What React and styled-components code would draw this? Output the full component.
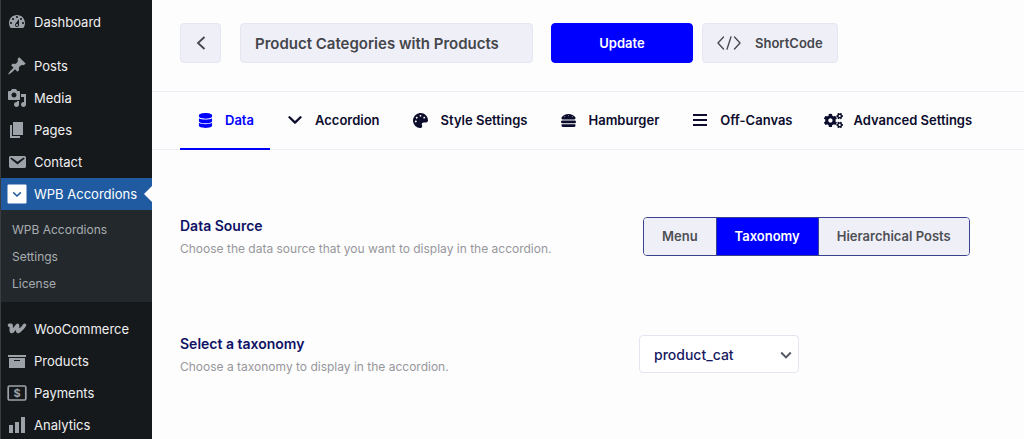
import React, { useState } from 'react';
import styled, { createGlobalStyle, css } from 'styled-components';
import { FaDatabase, FaPalette, FaHamburger, FaCogs } from 'react-icons/fa';

const GlobalStyle = createGlobalStyle`
  *, *::before, *::after {
    box-sizing: border-box;
  }

  body {
    margin: 0;
    background: #fdfdfe;
    font-family: Inter, "Liberation Sans", sans-serif;
    font-size: 13px;
  }

  button, input, select {
    font-family: inherit;
  }
`;

const Page = styled.div`
  display: flex;
  min-height: 100vh;
`;

const Sidebar = styled.nav`
  flex: 0 0 152px;
  padding-top: 6px;
  background: #16191c;
  border-left: 1px solid #3a3d40;
`;

const MenuList = styled.ul`
  list-style: none;
  margin: 0 0 ${({ $gap }) => $gap || 0}px;
  padding: 0;
`;

const MenuLink = styled.a`
  position: relative;
  display: flex;
  align-items: center;
  gap: 7px;
  height: 32px;
  padding-left: 6px;
  color: #f0f0f1;
  font-size: 13px;
  white-space: nowrap;
  text-decoration: none;

  svg {
    flex: none;
    width: 20px;
    height: 20px;
    fill: #9da2a8;
  }

  ${({ $active }) =>
    $active &&
    css`
      background: #205ba2;
      color: #fff;

      &::after {
        content: '';
        position: absolute;
        top: 8px;
        right: 0;
        border: 8px solid transparent;
        border-left-width: 0;
        border-right-color: #fdfdfe;
      }
    `}
`;

const SubMenu = styled.ul`
  list-style: none;
  margin: 0;
  padding: 6px 0 5px;
  background: #23282c;
`;

const SubLink = styled.a`
  display: block;
  padding-left: 11px;
  color: #a9adb1;
  font-size: 12px;
  line-height: 27px;
  text-decoration: none;
`;

const Main = styled.main`
  flex: 1;
  min-width: 0;
`;

const TopBar = styled.header`
  display: flex;
  align-items: center;
  padding: 23px 28px 28px;
  border-bottom: 1px solid #ededf5;
`;

const Button = styled.button`
  display: flex;
  align-items: center;
  justify-content: center;
  gap: 14px;
  height: 40px;
  padding: 0 14px;
  border: 1px solid ${({ $primary }) => ($primary ? '#0000ff' : '#e6e6f3')};
  border-radius: 4px;
  background: ${({ $primary }) => ($primary ? '#0000ff' : '#efeff8')};
  color: ${({ $primary }) => ($primary ? '#fff' : '#44464b')};
  font-size: 13px;
  font-weight: 600;
  cursor: pointer;
`;

const BackButton = styled(Button)`
  width: 41px;
  margin-right: 19px;
  padding: 0;
`;

const UpdateButton = styled(Button)`
  width: 142px;
  margin-right: 9px;
`;

const TitleInput = styled.input`
  flex: 0 1 293px;
  min-width: 0;
  height: 40px;
  margin-right: 18px;
  padding: 0 14px;
  border: 1px solid #e6e6f3;
  border-radius: 4px;
  background: #efeff8;
  color: #44464b;
  font-size: 15px;
  font-weight: 600;
`;

const Tabs = styled.div`
  display: flex;
  padding: 0 28px;
  border-bottom: 1px solid #ededf5;
`;

const Tab = styled.button`
  display: flex;
  align-items: center;
  gap: 10px;
  height: 58px;
  margin-bottom: -1px;
  padding: 0 16px 0 15px;
  border: 0;
  border-bottom: 2px solid ${({ $active }) => ($active ? '#0000ff' : 'transparent')};
  background: none;
  color: ${({ $active }) => ($active ? '#0000ff' : '#0c0c2c')};
  font-size: 13px;
  font-weight: 600;
  white-space: nowrap;
  cursor: pointer;
`;

const TabIcon = styled.span`
  display: flex;
  justify-content: center;
  width: 20px;
  font-size: ${({ $size }) => $size}px;
`;

const Settings = styled.section`
  display: grid;
  gap: 78px;
  padding: 67px 28px;
`;

const Field = styled.div`
  display: grid;
  grid-template-columns: 9fr 7fr;
  align-items: start;
`;

const FieldName = styled.div`
  display: block;
  color: #0f1165;
  font-size: 14px;
  font-weight: 600;
  line-height: 18px;
`;

const FieldHint = styled.p`
  margin: 6px 0 0;
  color: #97979b;
  font-size: 12px;
  line-height: 16px;
`;

const Segments = styled.div`
  display: flex;
  width: max-content;
  margin-left: 4px;
  border: 1px solid #3a418f;
  border-radius: 4px;
  overflow: hidden;
`;

const Segment = styled.label`
  padding: 0 18px;
  background: #efeff8;
  color: #4e4f55;
  font-size: 13px;
  font-weight: 600;
  line-height: 37px;
  cursor: pointer;

  & + & {
    border-left: 1px solid #3a418f;
  }

  &:has(input:checked) {
    background: #0000ff;
    color: #fff;
  }

  input {
    position: absolute;
    opacity: 0;
    pointer-events: none;
  }
`;

const SelectWrap = styled.div`
  position: relative;
  width: 160px;

  svg {
    position: absolute;
    top: 14px;
    right: 7px;
    pointer-events: none;
  }
`;

const Select = styled.select`
  width: 100%;
  height: 38px;
  padding: 0 28px 0 14px;
  border: 1px solid #e4e4f2;
  border-radius: 4px;
  appearance: none;
  background: #fff;
  color: #17195f;
  font-size: 14px;
  font-weight: 500;
`;

const icons = {
  dashboard: (
    <path d="M3.76 16h12.48c1.1-1.37 1.76-3.11 1.76-5 0-4.42-3.58-8-8-8s-8 3.58-8 8c0 1.89.66 3.63 1.76 5zM10 4c.55 0 1 .45 1 1s-.45 1-1 1-1-.45-1-1 .45-1 1-1zM6 6c.55 0 1 .45 1 1s-.45 1-1 1-1-.45-1-1 .45-1 1-1zm8 0c.55 0 1 .45 1 1s-.45 1-1 1-1-.45-1-1 .45-1 1-1zm-5.37 5.55L12 7v6c0 1.1-.9 2-2 2s-2-.9-2-2c0-.57.24-1.08.63-1.45zM4 10c.55 0 1 .45 1 1s-.45 1-1 1-1-.45-1-1 .45-1 1-1zm12 0c.55 0 1 .45 1 1s-.45 1-1 1-1-.45-1-1 .45-1 1-1zm-5 3c0-.55-.45-1-1-1s-1 .45-1 1 .45 1 1 1 1-.45 1-1z" />
  ),
  posts: (
    <path d="M10.44 3.02l1.82-1.82 6.36 6.35-1.83 1.82c-1.05-.68-2.48-.57-3.41.36l-.75.75c-.92.93-1.04 2.35-.35 3.41l-1.83 1.82-2.41-2.41-2.8 2.79c-.42.42-3.38 2.71-3.8 2.29s1.86-3.39 2.28-3.81l2.79-2.79L4.1 9.36l1.83-1.82c1.05.69 2.48.57 3.4-.36l.75-.75c.93-.92 1.05-2.35.36-3.41z" />
  ),
  media: (
    <path d="M13 11V4c0-.55-.45-1-1-1h-1.67L9 1H5L3.67 3H2c-.55 0-1 .45-1 1v7c0 .55.45 1 1 1h10c.55 0 1-.45 1-1zM7 4.5c1.38 0 2.5 1.12 2.5 2.5S8.38 9.5 7 9.5 4.5 8.38 4.5 7 5.62 4.5 7 4.5zM14 6h5v10.5c0 1.38-1.12 2.5-2.5 2.5S14 17.88 14 16.5s1.12-2.5 2.5-2.5c.17 0 .34.02.5.05V9h-3V6zm-4 8.05V13h2v3.5c0 1.38-1.12 2.5-2.5 2.5S7 17.88 7 16.5 8.12 14 9.5 14c.17 0 .34.02.5.05z" />
  ),
  pages: <path d="M6 15V2h10v13H6zm-1 1h8v2H3V5h2v11z" />,
  contact: (
    <path d="M3.87 4h13.25C18.37 4 19 4.59 19 5.79v8.42c0 1.19-.63 1.79-1.88 1.79H3.87c-1.25 0-1.88-.6-1.88-1.79V5.79c0-1.2.63-1.79 1.88-1.79zm6.62 8.6l6.74-5.53c.24-.2.43-.66.13-1.07-.29-.41-.82-.42-1.17-.17l-5.7 3.86L4.8 5.83c-.35-.25-.88-.24-1.17.17-.3.41-.11.87.13 1.07z" />
  ),
  accordions: (
    <>
      <rect x="0.5" y="0.5" width="19" height="19" rx="1" fill="#fff" />
      <path d="M6.2 8.4l3.8 3.6 3.8-3.6" fill="none" stroke="#205ba2" strokeWidth="1.5" />
    </>
  ),
  woo: (
    <path
      d="M2.4 6.2h1.8v5.2q0 2 1.6.6L10.6 6.2v5.2q0 2 1.6.6Q15.6 9.6 17.6 6.2"
      fill="none"
      stroke="#9da2a8"
      strokeWidth="3.4"
      strokeLinejoin="round"
      strokeLinecap="round"
    />
  ),
  products: <path d="M19 4v2H1V4h18zM2 7h16v10H2V7zm11 3V9H7v1h6z" />,
  payments: (
    <>
      <rect x="1.2" y="3" width="17.6" height="14" rx="1.2" fill="none" stroke="#9da2a8" strokeWidth="1.7" />
      <text x="10" y="14" textAnchor="middle" fontSize="11" fontWeight="700">$</text>
    </>
  ),
  analytics: <path d="M18 18V2h-4v16h4zm-6 0V7H8v11h4zm-6 0v-8H2v8h4z" />,
};

const contentMenu = [
  ['posts', 'Posts'],
  ['media', 'Media'],
  ['pages', 'Pages'],
  ['contact', 'Contact'],
];

const shopMenu = [
  ['woo', 'WooCommerce'],
  ['products', 'Products'],
  ['payments', 'Payments'],
  ['analytics', 'Analytics'],
];

const LinesIcon = () => (
  <svg width="14" height="14" viewBox="0 0 14 14" stroke="currentColor" strokeWidth="2">
    <path d="M0 2h14M0 7h14M0 12h14" />
  </svg>
);

const ChevronIcon = () => (
  <svg width="14" height="14" viewBox="0 0 14 14" fill="none" stroke="currentColor" strokeWidth="2.3" strokeLinecap="round" strokeLinejoin="round">
    <path d="M1.5 4.2L7 9.6l5.5-5.4" />
  </svg>
);

const tabs = [
  { label: 'Data', icon: <FaDatabase />, size: 15 },
  { label: 'Accordion', icon: <ChevronIcon />, size: 14 },
  { label: 'Style Settings', icon: <FaPalette />, size: 15 },
  { label: 'Hamburger', icon: <FaHamburger />, size: 15 },
  { label: 'Off-Canvas', icon: <LinesIcon />, size: 14 },
  { label: 'Advanced Settings', icon: <FaCogs />, size: 19 },
];

function MenuItem({ icon, label, active, children }) {
  return (
    <li>
      <MenuLink href="#" $active={active}>
        <svg viewBox="0 0 20 20" aria-hidden="true">{icons[icon]}</svg>
        {label}
      </MenuLink>
      {children}
    </li>
  );
}

function AdminMenu() {
  return (
    <Sidebar>
      <MenuList $gap={12}>
        <MenuItem icon="dashboard" label="Dashboard" />
      </MenuList>
      <MenuList $gap={11}>
        {contentMenu.map(([icon, label]) => (
          <MenuItem key={icon} icon={icon} label={label} />
        ))}
        <MenuItem icon="accordions" label="WPB Accordions" active>
          <SubMenu>
            {['WPB Accordions', 'Settings', 'License'].map((label) => (
              <li key={label}>
                <SubLink href="#">{label}</SubLink>
              </li>
            ))}
          </SubMenu>
        </MenuItem>
      </MenuList>
      <MenuList>
        {shopMenu.map(([icon, label]) => (
          <MenuItem key={icon} icon={icon} label={label} />
        ))}
      </MenuList>
    </Sidebar>
  );
}

function App() {
  const [tab, setTab] = useState('Data');
  const [source, setSource] = useState('Taxonomy');

  return (
    <Page>
      <GlobalStyle />
      <AdminMenu />
      <Main>
        <TopBar>
          <BackButton type="button" aria-label="Back">
            <svg width="10" height="14" viewBox="0 0 10 14" fill="none" stroke="currentColor" strokeWidth="1.8">
              <path d="M8.5 1L2 7l6.5 6" />
            </svg>
          </BackButton>
          <TitleInput aria-label="Title" defaultValue="Product Categories with Products" />
          <UpdateButton type="button" $primary>Update</UpdateButton>
          <Button type="button">
            <svg width="24" height="14" viewBox="0 0 24 14" fill="none" stroke="currentColor" strokeWidth="1.3" strokeLinecap="round" strokeLinejoin="round">
              <path d="M6.5 1L1 7l5.5 6M17.5 1L23 7l-5.5 6M14 .8L10 13.2" />
            </svg>
            ShortCode
          </Button>
        </TopBar>

        <Tabs role="tablist">
          {tabs.map(({ label, icon, size }) => (
            <Tab
              key={label}
              type="button"
              role="tab"
              aria-selected={tab === label}
              $active={tab === label}
              onClick={() => setTab(label)}
            >
              <TabIcon $size={size}>{icon}</TabIcon>
              {label}
            </Tab>
          ))}
        </Tabs>

        <Settings>
          <Field>
            <div>
              <FieldName id="source-label">Data Source</FieldName>
              <FieldHint>Choose the data source that you want to display in the accordion.</FieldHint>
            </div>
            <Segments role="radiogroup" aria-labelledby="source-label">
              {['Menu', 'Taxonomy', 'Hierarchical Posts'].map((name) => (
                <Segment key={name}>
                  <input
                    type="radio"
                    name="source"
                    value={name}
                    checked={source === name}
                    onChange={() => setSource(name)}
                  />
                  {name}
                </Segment>
              ))}
            </Segments>
          </Field>

          <Field>
            <div>
              <FieldName as="label" htmlFor="taxonomy">Select a taxonomy</FieldName>
              <FieldHint>Choose a taxonomy to display in the accordion.</FieldHint>
            </div>
            <SelectWrap>
              <Select id="taxonomy" defaultValue="product_cat">
                <option value="product_cat">product_cat</option>
              </Select>
              <svg width="12" height="12" viewBox="0 0 12 12" fill="none" stroke="#50575e" strokeWidth="1.9">
                <path d="M1.2 3.5L6 8.3l4.8-4.8" />
              </svg>
            </SelectWrap>
          </Field>
        </Settings>
      </Main>
    </Page>
  );
}

export default App;
